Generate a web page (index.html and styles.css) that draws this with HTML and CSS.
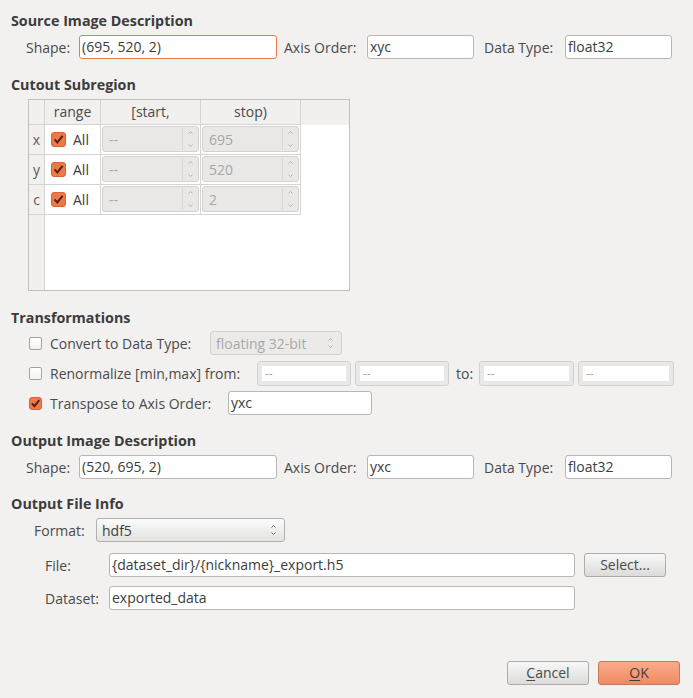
FILE: index.html
```html
<!DOCTYPE html>
<html>
<head>
<meta charset="utf-8">
<title>Export</title>
<link rel="stylesheet" href="styles.css">
</head>
<body>
<div class="dialog">
  <div class="heading">Source Image Description</div>
  <div class="desc-row first">
    <span class="lbl">Shape:</span>
    <div class="field focus">(695, 520, 2)</div>
    <span class="lbl l-axis">Axis Order:</span>
    <div class="field">xyc</div>
    <span class="lbl l-type">Data Type:</span>
    <div class="field">float32</div>
  </div>

  <div class="heading h-cut">Cutout Subregion</div>
  <div class="table">
    <div class="hcell corner"></div>
    <div class="hcell">range</div>
    <div class="hcell">[start,</div>
    <div class="hcell">stop)</div>
    <div class="hfill"></div>

    <div class="vcell">x</div>
    <div class="cell range"><svg class="cb" width="15" height="15" viewBox="0 0 15 15"><rect x="0.5" y="0.5" width="14" height="14" rx="2.5" fill="#f07746" stroke="#d4643a"/><path d="M3.6 7.4 L6.3 10.4 L11.6 3.8" fill="none" stroke="#4e2518" stroke-width="2"/></svg><span>All</span></div>
    <div class="cell"><div class="spin"><span class="sv">--</span><span class="sa"><svg width="7" height="24" viewBox="0 0 7 24"><path d="M1.5 6.5 L3.5 4.5 L5.5 6.5" fill="none" stroke="#b4b4b4"/><path d="M1.5 17.5 L3.5 19.5 L5.5 17.5" fill="none" stroke="#b4b4b4"/></svg></span></div></div>
    <div class="cell"><div class="spin"><span class="sv">695</span><span class="sa"><svg width="7" height="24" viewBox="0 0 7 24"><path d="M1.5 6.5 L3.5 4.5 L5.5 6.5" fill="none" stroke="#b4b4b4"/><path d="M1.5 17.5 L3.5 19.5 L5.5 17.5" fill="none" stroke="#b4b4b4"/></svg></span></div></div>
    <div class="bfill"></div>

    <div class="vcell">y</div>
    <div class="cell range"><svg class="cb" width="15" height="15" viewBox="0 0 15 15"><rect x="0.5" y="0.5" width="14" height="14" rx="2.5" fill="#f07746" stroke="#d4643a"/><path d="M3.6 7.4 L6.3 10.4 L11.6 3.8" fill="none" stroke="#4e2518" stroke-width="2"/></svg><span>All</span></div>
    <div class="cell"><div class="spin"><span class="sv">--</span><span class="sa"><svg width="7" height="24" viewBox="0 0 7 24"><path d="M1.5 6.5 L3.5 4.5 L5.5 6.5" fill="none" stroke="#b4b4b4"/><path d="M1.5 17.5 L3.5 19.5 L5.5 17.5" fill="none" stroke="#b4b4b4"/></svg></span></div></div>
    <div class="cell"><div class="spin"><span class="sv">520</span><span class="sa"><svg width="7" height="24" viewBox="0 0 7 24"><path d="M1.5 6.5 L3.5 4.5 L5.5 6.5" fill="none" stroke="#b4b4b4"/><path d="M1.5 17.5 L3.5 19.5 L5.5 17.5" fill="none" stroke="#b4b4b4"/></svg></span></div></div>
    <div class="bfill"></div>

    <div class="vcell">c</div>
    <div class="cell range"><svg class="cb" width="15" height="15" viewBox="0 0 15 15"><rect x="0.5" y="0.5" width="14" height="14" rx="2.5" fill="#f07746" stroke="#d4643a"/><path d="M3.6 7.4 L6.3 10.4 L11.6 3.8" fill="none" stroke="#4e2518" stroke-width="2"/></svg><span>All</span></div>
    <div class="cell"><div class="spin"><span class="sv">--</span><span class="sa"><svg width="7" height="24" viewBox="0 0 7 24"><path d="M1.5 6.5 L3.5 4.5 L5.5 6.5" fill="none" stroke="#b4b4b4"/><path d="M1.5 17.5 L3.5 19.5 L5.5 17.5" fill="none" stroke="#b4b4b4"/></svg></span></div></div>
    <div class="cell"><div class="spin"><span class="sv">2</span><span class="sa"><svg width="7" height="24" viewBox="0 0 7 24"><path d="M1.5 6.5 L3.5 4.5 L5.5 6.5" fill="none" stroke="#b4b4b4"/><path d="M1.5 17.5 L3.5 19.5 L5.5 17.5" fill="none" stroke="#b4b4b4"/></svg></span></div></div>
    <div class="bfill"></div>

    <div class="vfill"></div>
    <div class="rest"></div>
  </div>

  <div class="heading h-trans">Transformations</div>
  <div class="trow first-t">
    <span class="ucb"></span>
    <span class="tlabel w-convert">Convert to Data Type:</span>
    <div class="combo disabled"><span>floating 32-bit</span><svg width="7" height="16" viewBox="0 0 7 16"><path d="M1.5 5.5 L3.5 3.5 L5.5 5.5" fill="none" stroke="#b0b0b0"/><path d="M1.5 10.5 L3.5 12.5 L5.5 10.5" fill="none" stroke="#b0b0b0"/></svg></div>
  </div>
  <div class="trow">
    <span class="ucb"></span>
    <span class="tlabel w-renorm">Renormalize [min,max] from:</span>
    <div class="dfield">--</div>
    <div class="dfield gap">--</div>
    <span class="to">to:</span>
    <div class="dfield w95">--</div>
    <div class="dfield gap w96">--</div>
  </div>
  <div class="trow">
    <svg class="tcb" width="13" height="13" viewBox="0 0 13 13"><rect x="0.5" y="0.5" width="12" height="12" rx="2.5" fill="#f07746" stroke="#d4643a"/><path d="M2.9 6.4 L5.4 9.2 L10.2 3.1" fill="none" stroke="#4e2518" stroke-width="2"/></svg>
    <span class="tlabel w-trans">Transpose to Axis Order:</span>
    <div class="field w-axis">yxc</div>
  </div>

  <div class="heading h-out">Output Image Description</div>
  <div class="desc-row">
    <span class="lbl">Shape:</span>
    <div class="field">(520, 695, 2)</div>
    <span class="lbl l-axis">Axis Order:</span>
    <div class="field">yxc</div>
    <span class="lbl l-type">Data Type:</span>
    <div class="field">float32</div>
  </div>

  <div class="heading h-file">Output File Info</div>
  <div class="frow">
    <span class="flabel">Format:</span>
    <div class="combo enabled"><span>hdf5</span><svg width="7" height="16" viewBox="0 0 7 16"><path d="M1.5 5.5 L3.5 3.5 L5.5 5.5" fill="none" stroke="#6a6a6a"/><path d="M1.5 10.5 L3.5 12.5 L5.5 10.5" fill="none" stroke="#6a6a6a"/></svg></div>
  </div>
  <div class="prow p-file">
    <span class="plabel">File:</span>
    <div class="field w-path">{dataset_dir}/{nickname}_export.h5</div>
    <button class="btn select">Select...</button>
  </div>
  <div class="prow p-data">
    <span class="plabel">Dataset:</span>
    <div class="field w-path">exported_data</div>
  </div>

  <div class="buttons">
    <button class="btn"><u>C</u>ancel</button>
    <button class="btn ok"><u>O</u>K</button>
  </div>
</div>
</body>
</html>
```

FILE: styles.css
```css
* { box-sizing: border-box; }
html, body { margin: 0; padding: 0; }
body {
  background: #f2f1f0;
  font-family: "Open Sans", "DejaVu Sans", sans-serif;
  font-size: 14px;
  color: #3c3c3c;
  width: 693px;
  height: 698px;
  overflow: hidden;
}
.dialog {
  display: flex;
  flex-direction: column;
  padding-top: 12px;
  height: 698px;
}
.heading {
  font-weight: bold;
  font-size: 14.3px;
  line-height: 18px;
  height: 18px;
  padding-left: 11px;
  color: #3c3c3c;
}
.h-cut { margin-top: 17px; }
.h-trans { margin-top: 18px; }
.h-out { margin-top: 14px; }
.h-file { margin-top: 16px; }

.desc-row {
  display: grid;
  grid-template-columns: 53px 198px 90px 107px 91px 107px;
  align-items: center;
  height: 24px;
  margin-top: 5px;
  padding-left: 26px;
}
.lbl { color: #4a4a4a; white-space: nowrap; }
.l-axis { padding-left: 7px; }
.l-type { padding-left: 10px; }

.field {
  height: 24px;
  line-height: 22px;
  background: #fff;
  border: 1px solid #b9b6b3;
  border-radius: 3px;
  padding: 0 2px;
  color: #3c3c3c;
  white-space: nowrap;
  overflow: hidden;
}
.field.focus { border-color: #ee7a4c; }

/* table */
.table {
  margin-top: 5px;
  margin-left: 28px;
  width: 322px;
  height: 192px;
  border: 1px solid #c2c0be;
  background: #fff;
  display: grid;
  grid-template-columns: 16px 56px 100px 100px 1fr;
  grid-template-rows: 25px 30px 30px 30px 1fr;
}
.hcell {
  background: #f1f0ef;
  border-right: 1px solid #d6d4d2;
  border-bottom: 1px solid #d6d4d2;
  text-align: center;
  line-height: 24px;
  color: #4a4a4a;
}
.hfill { background: #f1f0ef; }
.vcell {
  background: #f1f0ef;
  border-right: 1px solid #d6d4d2;
  border-bottom: 1px solid #d6d4d2;
  text-align: center;
  line-height: 29px;
  color: #5a5a5a;
}
.vfill {
  background: #f1f0ef;
  border-right: 1px solid #d6d4d2;
}
.rest { grid-column: 2 / 6; background: #fff; }
.bfill { background: #fff; }
.cell {
  border-right: 1px solid #d6d4d2;
  border-bottom: 1px solid #d6d4d2;
  background: #fff;
  padding: 1px 1px 2px 1px;
}
.cell.range {
  display: flex;
  align-items: center;
  padding: 0 0 0 6px;
  gap: 7px;
  color: #3c3c3c;
}
.cb { flex: none; }
.spin {
  height: 100%;
  display: flex;
  background: #e9e8e7;
  border: 1px solid #d4d2d0;
  border-radius: 3px;
}
.sv {
  flex: 1;
  padding-left: 6px;
  line-height: 25px;
  color: #a8a6a4;
}
.sa {
  width: 16px;
  border-left: 1px solid #d9d7d5;
  display: flex;
  align-items: center;
  justify-content: center;
  margin: 1px 0;
}

/* transformations */
.trow {
  display: flex;
  align-items: center;
  height: 30px;
  padding-left: 29px;
}
.first-t { margin-top: 1px; }
.ucb {
  width: 13px;
  height: 13px;
  border: 1px solid #a5a3a1;
  border-radius: 2px;
  background: linear-gradient(#ffffff, #f3f2f1);
  flex: none;
}
.tcb { flex: none; }
.tlabel {
  padding-left: 8px;
  white-space: nowrap;
  color: #4a4a4a;
  flex: none;
}
.w-convert { width: 168px; }
.w-renorm { width: 215px; }
.w-trans { width: 186px; }

.combo {
  display: flex;
  align-items: center;
  justify-content: space-between;
  height: 24px;
  border-radius: 3px;
  padding: 0 7px 0 5px;
}
.combo.disabled {
  width: 132px;
  background: #ebeae9;
  border: 1px solid #d3d1cf;
  color: #aaa8a6;
}
.combo.enabled {
  width: 189px;
  background: linear-gradient(#fbfbfb, #e4e3e2);
  border: 1px solid #b2b0ae;
  color: #3c3c3c;
}

.dfield {
  width: 94px;
  height: 25px;
  line-height: 23px;
  border: 1px solid #d2d0ce;
  border-radius: 3px;
  background: #fff;
  box-shadow: inset 0 0 0 4px #e9e8e7;
  padding-left: 7px;
  color: #a8a6a4;
  font-size: 12px;
  flex: none;
}
.dfield.gap { margin-left: 4px; }
.dfield.w95 { width: 95px; }
.dfield.w96 { width: 96px; }
.to {
  width: 30px;
  padding-left: 7px;
  color: #4a4a4a;
  flex: none;
}
.w-axis { width: 144px; }

/* output file */
.frow {
  display: flex;
  align-items: center;
  height: 24px;
  margin-top: 5px;
  padding-left: 34px;
}
.flabel { width: 62px; color: #4a4a4a; }
.prow {
  display: flex;
  align-items: center;
  height: 24px;
  padding-left: 45px;
}
.p-file { margin-top: 11px; }
.p-data { margin-top: 9px; }
.plabel { width: 64px; color: #4a4a4a; }
.w-path { width: 466px; }

.btn {
  font-family: inherit;
  font-size: 14px;
  color: #4a4a4a;
  width: 82px;
  height: 24px;
  padding: 0;
  border: 1px solid #aeacaa;
  border-radius: 3px;
  background: linear-gradient(#f8f8f8, #dcdbda);
  line-height: 20px;
}
.btn u { text-decoration-thickness: 1px; text-underline-offset: 2px; }
.select { margin-left: 9px; }
.buttons {
  margin-top: auto;
  margin-bottom: 13px;
  display: flex;
  justify-content: flex-end;
  gap: 9px;
  padding-right: 13px;
}
.btn.ok {
  background: linear-gradient(#fbab8c, #ef8a63);
  border-color: #c8785a;
  color: #4a3a34;
}
```
